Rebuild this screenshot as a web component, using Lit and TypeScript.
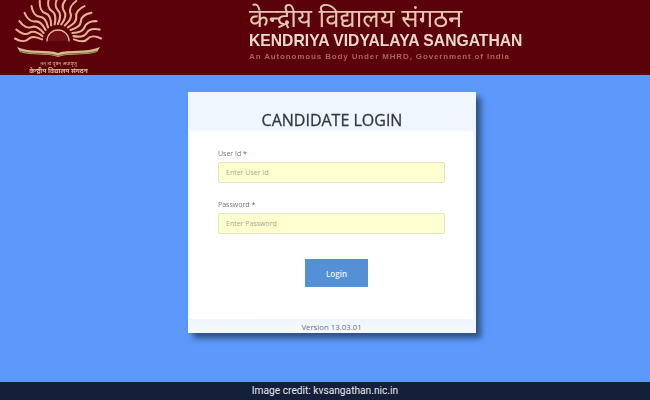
import { LitElement, html, css, svg } from "lit";
import { customElement } from "lit/decorators.js";

const angles = [-88, -76, -64, -51, -38, -25, -12, 0, 12, 25, 38, 51, 64, 76, 88];

function rayPath(deg: number): string {
  const cx = 58, cy = 40;
  const a = (deg * Math.PI) / 180;
  const ux = Math.sin(a), uy = -Math.cos(a);
  const nx = -uy, ny = ux;
  const r0 = 16, len = 27;
  const p = (d: number, w: number) =>
    `${(cx + ux * (r0 + d) + nx * w).toFixed(1)} ${(cy + uy * (r0 + d) + ny * w).toFixed(1)}`;
  return `M${p(0, 0)} C${p(len * 0.25, 3)} ${p(len * 0.4, 3)} ${p(len * 0.5, 0)} S${p(len * 0.8, -3)} ${p(len, 0)}`;
}

@customElement("app-root")
export class AppRoot extends LitElement {
  static styles = css`
    :host { display: block; width: 650px; height: 400px; font-family: "Open Sans", sans-serif; }
    .page { display: flex; flex-direction: column; width: 650px; height: 400px; background: #5c99fa; overflow: hidden; }
    .banner { flex: 0 0 75px; background: #5a0109; display: flex; }
    .logo { flex: 0 0 249px; display: flex; flex-direction: column; align-items: flex-start; }
    .logo svg { display: block; filter: blur(0.4px); }
    .logo-cap { width: 117px; text-align: center; color: #e3b9a0; font-family: "Noto Sans", sans-serif; line-height: 8px; filter: blur(0.3px); }
    .cap1 { font-size: 5px; margin-top: -1px; }
    .cap2 { font-size: 6.5px; font-weight: 700; }
    .titles { display: flex; flex-direction: column; padding-top: 3px; filter: blur(0.35px); }
    .hindi { font-family: "Noto Sans", "DejaVu Sans", sans-serif; font-size: 25.7px; line-height: 29px; color: #e6c6b3; white-space: nowrap; }
    .eng { font-family: "Liberation Sans", sans-serif; font-weight: 700; font-size: 15.7px; line-height: 18px; color: #e9d8cb; white-space: nowrap; }
    .sub { font-family: "Liberation Sans", sans-serif; font-weight: 700; font-size: 8px; letter-spacing: 0.86px; line-height: 10px; color: #b0625a; white-space: nowrap; margin-top: 2px; }
    .main { flex: 1; padding: 17px 0 0 188px; }
    .card { width: 288px; height: 241px; box-sizing: border-box; background: linear-gradient(#eff6fe, #f2f8ff); box-shadow: 5px 5px 6px #2f4f80; padding: 0 3px 0 2px; display: flex; flex-direction: column; }
    .title { flex: 0 0 39px; box-sizing: border-box; padding-top: 17px; padding-left: 1px; text-align: center; font-size: 16px; font-weight: 400; -webkit-text-stroke: 0.3px #33393f; line-height: 22px; color: #33393f; filter: blur(0.3px); }
    .body { flex: 0 0 188px; background: #fff; padding: 18px 28px 0; box-sizing: border-box; display: flex; flex-direction: column; }
    label { font-size: 7px; line-height: 10px; color: #777; display: block; filter: blur(0.25px); }
    label span { color: #c0392b; }
    .input { height: 21px; box-sizing: border-box; margin-top: 3px; width: 227px; background: #ffffcf; border: 1px solid #e3e6c3; border-radius: 2px; font-size: 7px; line-height: 19px; padding-left: 7px; color: #a8a890; }
    .second { margin-top: 17px; }
    .btn { align-self: flex-start; margin: 25px 0 0 87px; width: 63px; height: 28px; background: #5590d6; color: #eaf2fb; font-size: 8px; font-weight: 600; display: flex; align-items: center; justify-content: center; }
    .version { flex: 1; font-size: 7.8px; line-height: 10px; padding-top: 3px; text-align: center; color: #66707c; background: linear-gradient(#eef4fb, #f6faff); }
    .credit { flex: 0 0 18px; background: #14203a; color: #e6e8ec; font-family: Roboto, sans-serif; font-size: 10.2px; line-height: 18px; text-align: center; }
  `;

  render() {
    return html`<div class="page">
      <div class="banner">
        <div class="logo">
          <svg width="117" height="60" viewBox="0 0 117 60">
            <g fill="none" stroke="#e8b092" stroke-width="2.1" stroke-linecap="round">
              ${angles.map((d) => svg`<path d=${rayPath(d)}></path>`)}
              <path d="M47 41 A11 11 0 0 1 69 41" stroke-width="1.3"></path>
            </g>
            <path d="M48 41 A10 10 0 0 1 68 41 Z" fill="#6d0f14"></path>
            <path d="M17 47 C30 53 48 49 58 53 C68 49 86 53 100 47 L97 52 C84 56 68 53 58 57 C48 53 32 56 20 52 Z" fill="#d9b98a"></path>
            <path d="M20 51 C32 55 48 52 58 56 C68 52 84 55 97 51" fill="none" stroke="#5d7a3a" stroke-width="1"></path>
          </svg>
          <div class="logo-cap cap1">तत् त्वं पूषन् अपावृणु</div>
          <div class="logo-cap cap2">केन्द्रीय विद्यालय संगठन</div>
        </div>
        <div class="titles">
          <div class="hindi">केन्द्रीय विद्यालय संगठन</div>
          <div class="eng">KENDRIYA VIDYALAYA SANGATHAN</div>
          <div class="sub">An Autonomous Body Under MHRD, Government of India</div>
        </div>
      </div>
      <div class="main">
        <div class="card">
          <div class="title">CANDIDATE LOGIN</div>
          <div class="body">
            <label>User Id <span>*</span></label>
            <div class="input">Enter User Id</div>
            <label class="second">Password <span>*</span></label>
            <div class="input">Enter Password</div>
            <div class="btn">Login</div>
          </div>
          <div class="version">Version 13.03.01</div>
        </div>
      </div>
      <div class="credit">Image credit: kvsangathan.nic.in</div>
    </div>`;
  }
}
